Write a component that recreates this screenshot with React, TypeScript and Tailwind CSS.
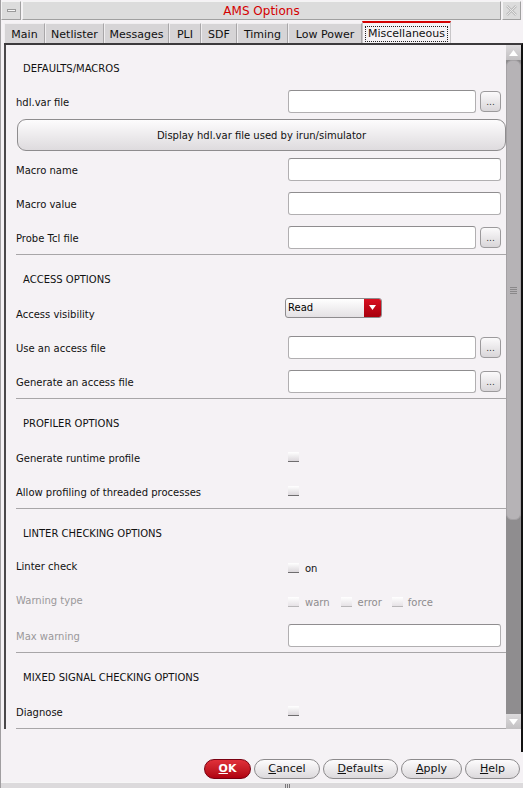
import React from "react";

function Browse() {
  return (
    <div className="w-[21px] h-[21px] rounded-[4px] border border-[#9c9a9c] bg-gradient-to-b from-[#fbfafb] to-[#d9d6d9] flex items-end justify-center pb-[4px] text-[9px] leading-none text-[#333]">
      ...
    </div>
  );
}

function Field({ browse }: { browse?: boolean }) {
  return (
    <div className="flex items-center gap-[4px]">
      <div
        className={
          browse
            ? "w-[188px] h-[23px] rounded-[3px] border border-[#b1afb1] border-t-[#8f8d8f] bg-white"
            : "w-[213px] h-[23px] rounded-[3px] border border-[#b1afb1] border-t-[#8f8d8f] bg-white"
        }
      />
      {browse && <Browse />}
    </div>
  );
}

function Check() {
  return <div className="w-[11px] h-[10px] bg-gradient-to-b from-[#ffffff] to-[#dcd8dc] border-b border-[#6f6d6f]" />;
}

function DimCheck() {
  return <div className="w-[11px] h-[10px] bg-gradient-to-b from-[#ffffff] to-[#e6e2e6] border-b border-[#b8b6b8]" />;
}

function Row({ label, children, h = "h-[34px]", dim }: { label: string; children?: React.ReactNode; h?: string; dim?: boolean }) {
  return (
    <div className={`${h} flex items-center`}>
      <div className={dim ? "w-[272px] pt-[2px] text-[#9a989a]" : "w-[272px] pt-[2px] text-[#111]"}>{label}</div>
      {children}
    </div>
  );
}

function Header({ title }: { title: string }) {
  return <div className="h-[34px] flex items-center pl-[7px] pt-[1px] text-[#111]">{title}</div>;
}

function Divider() {
  return <div className="h-px bg-[#a8a6a8]" />;
}

function Tab({ label, w, active }: { label: string; w: string; active?: boolean }) {
  if (active) {
    return (
      <div className={`${w} h-[22px] pt-[1px] border-t-2 border-[#d40000] border-x border-x-[#c8c6c8] bg-[#f5f2f5] flex items-center justify-center`}>
        <span className="px-[2px] border border-dotted border-[#222] leading-[14px]">{label}</span>
      </div>
    );
  }
  return (
    <div className={`${w} h-[20px] pt-[4px] border-l border-t border-[#f0eef0] border-r border-r-[#a8a6a8] bg-[#d6d4d6] flex items-center justify-center`}>
      {label}
    </div>
  );
}

function Btn({ label, u, w, primary }: { label: string; u: string; w: string; primary?: boolean }) {
  const rest = label.slice(1);
  if (primary) {
    return (
      <div className={`${w} h-[20px] rounded-full border border-[#7a0010] bg-gradient-to-b from-[#e0303a] to-[#b00010] text-white font-bold flex items-center justify-center pt-[1px]`}>
        <span className="underline">{u}</span>
        {rest}
      </div>
    );
  }
  return (
    <div className={`${w} h-[20px] rounded-full border border-[#8c8a8c] bg-gradient-to-b from-[#fdfcfd] to-[#dcd9dc] text-[#111] flex items-center justify-center pt-[1px]`}>
      <span className="underline">{u}</span>
      {rest}
    </div>
  );
}

export default function App() {
  return (
    <div className="w-[523px] h-[788px] overflow-hidden bg-[#f5f2f5] border-l border-[#a09ea0] flex flex-col font-['DejaVu_Sans',sans-serif] text-[10px]">
      {/* title bar */}
      <div className="h-[21px] flex pt-[1px] pr-[2px]">
        <div className="w-[20px] h-[19px] border border-[#f4f4f4] border-r-[#a0a0a0] border-b-[#a0a0a0] bg-[#dcdcdc] flex items-center justify-center">
          <div className="w-[9px] h-[3px] bg-[#f6f6f6] border border-[#9a9a9a]" />
        </div>
        <div className="flex-1 h-[19px] ml-[1px] border border-[#f4f4f4] border-r-[#a0a0a0] border-b-[#a0a0a0] bg-[#dcdcdc] flex items-center justify-center text-[12px] text-[#d40000]">
          AMS Options
        </div>
        <div className="w-[19px] h-[19px] ml-[1px] border border-[#f4f4f4] border-r-[#a0a0a0] border-b-[#a0a0a0] bg-[#dcdcdc] flex items-center justify-center">
          <svg width="11" height="11" viewBox="0 0 11 11">
            <path d="M1 1 L10 10 M10 1 L1 10" stroke="#bdbdbd" strokeWidth="2.5" fill="none" />
            <path d="M1 1 L10 10 M10 1 L1 10" stroke="#e8e8e8" strokeWidth="1" fill="none" />
          </svg>
        </div>
      </div>

      {/* tabs */}
      <div className="h-[22px] flex items-end pl-[3px] text-[11px] text-[#111]">
        <Tab label="Main" w="w-[41px]" />
        <Tab label="Netlister" w="w-[59px]" />
        <Tab label="Messages" w="w-[65px]" />
        <Tab label="PLI" w="w-[32px]" />
        <Tab label="SDF" w="w-[36px]" />
        <Tab label="Timing" w="w-[51px]" />
        <Tab label="Low Power" w="w-[74px]" />
        <Tab label="Miscellaneous" w="w-[89px]" active />
      </div>

      {/* panel */}
      <div className="ml-[3px] h-[709px] border-t-2 border-r-2 border-t-[#3c3a3c] border-r-[#111] flex flex-col">
        <div className="h-[684px] flex border-l-2 border-[#4a484a]">
          <div className="flex-1 overflow-hidden pl-[10px]">
            <div className="h-[6px]" />
            <Header title="DEFAULTS/MACROS" />
            <Row label="hdl.var file" h="h-[33px]">
              <Field browse />
            </Row>
            <div className="h-[34px] flex items-center">
              <div className="w-[489px] ml-[1px] h-[32px] rounded-[9px] border border-[#8e8c8e] bg-gradient-to-b from-[#fdfcfd] to-[#dedbde] flex items-center justify-center pt-[1px] text-[#111]">
                Display hdl.var file used by irun/simulator
              </div>
            </div>
            <Row label="Macro name">
              <Field />
            </Row>
            <Row label="Macro value">
              <Field />
            </Row>
            <Row label="Probe Tcl file">
              <Field browse />
            </Row>
            <Divider />

            <div className="h-[7px]" />
            <Header title="ACCESS OPTIONS" />
            <Row label="Access visibility">
              <div className="-ml-[3px] -mt-[11px] w-[97px] h-[20px] rounded-[3px] border border-[#8e8c8e] bg-gradient-to-b from-[#ffffff] to-[#e4e1e4] flex overflow-hidden">
                <div className="flex-1 pl-[2px] flex items-center text-[10px] text-black">Read</div>
                <div className="w-[17px] bg-gradient-to-b from-[#d81020] to-[#a8000c] flex items-center justify-center">
                  <svg width="7" height="5" viewBox="0 0 7 5">
                    <path d="M0 0 H7 L3.5 5 Z" fill="#ffffff" />
                  </svg>
                </div>
              </div>
            </Row>
            <Row label="Use an access file">
              <Field browse />
            </Row>
            <Row label="Generate an access file">
              <Field browse />
            </Row>
            <Divider />

            <div className="h-[7px]" />
            <Header title="PROFILER OPTIONS" />
            <Row label="Generate runtime profile">
              <Check />
            </Row>
            <Row label="Allow profiling of threaded processes">
              <Check />
            </Row>
            <Divider />

            <div className="h-[7px]" />
            <Header title="LINTER CHECKING OPTIONS" />
            <div className="h-[34px] flex items-center">
              <div className="w-[272px] -mt-[2px] text-[#111]">Linter check</div>
              <div className="flex items-center gap-[6px] text-[#111] pt-[2px]">
                <Check />
                <span>on</span>
              </div>
            </div>
            <div className="h-[34px] flex items-center">
              <div className="w-[272px] -mt-[2px] text-[#9a989a]">Warning type</div>
              <div className="flex items-center text-[#8e8c8e] pt-[2px]">
                <DimCheck />
                <span className="ml-[6px] mr-[11px]">warn</span>
                <DimCheck />
                <span className="ml-[6px] mr-[10px]">error</span>
                <DimCheck />
                <span className="ml-[5px]">force</span>
              </div>
            </div>
            <Row label="Max warning" dim>
              <Field />
            </Row>
            <Divider />

            <div className="h-[7px]" />
            <Header title="MIXED SIGNAL CHECKING OPTIONS" />
            <Row label="Diagnose">
              <Check />
            </Row>
            <Divider />
          </div>

          {/* scrollbar */}
          <div className="w-[15px] flex flex-col bg-[#8f8d8f]">
            <div className="h-[15px] bg-gradient-to-b from-[#dcdadc] to-[#c2c0c2] flex items-center justify-center">
              <svg width="9" height="6" viewBox="0 0 9 6">
                <path d="M4.5 0 L9 6 H0 Z" fill="#ffffff" />
              </svg>
            </div>
            <div className="h-[460px] rounded-[6px] bg-[#b6b3b6] border border-[#a4a1a4] flex items-center justify-center">
              <div className="flex flex-col gap-[1px]">
                <div className="w-[7px] h-px bg-[#8a888a]" />
                <div className="w-[7px] h-px bg-[#8a888a]" />
                <div className="w-[7px] h-px bg-[#8a888a]" />
                <div className="w-[7px] h-px bg-[#8a888a]" />
              </div>
            </div>
            <div className="flex-1" />
            <div className="h-[15px] bg-gradient-to-b from-[#dcdadc] to-[#c2c0c2] flex items-center justify-center">
              <svg width="9" height="6" viewBox="0 0 9 6">
                <path d="M0 0 H9 L4.5 6 Z" fill="#ffffff" />
              </svg>
            </div>
          </div>
        </div>
        <div className="flex-1" />
      </div>

      {/* buttons */}
      <div className="h-[30px] flex justify-end items-start gap-[3px] pt-[7px] pr-[3px] text-[11px]">
        <Btn label="OK" u="O" w="w-[47px]" primary />
        <Btn label="Cancel" u="C" w="w-[66px]" />
        <Btn label="Defaults" u="D" w="w-[75px]" />
        <Btn label="Apply" u="A" w="w-[61px]" />
        <Btn label="Help" u="H" w="w-[55px]" />
      </div>

      {/* grip */}
      <div className="flex-1 bg-[#dcdadc] border-t border-[#f6f6f6] flex justify-center pt-[1px]">
        <div className="flex gap-[1px] ml-[50px]">
          <div className="w-px h-[4px] bg-[#7a787a]" />
          <div className="w-px h-[4px] bg-[#7a787a]" />
          <div className="w-px h-[4px] bg-[#7a787a]" />
        </div>
      </div>
    </div>
  );
}
